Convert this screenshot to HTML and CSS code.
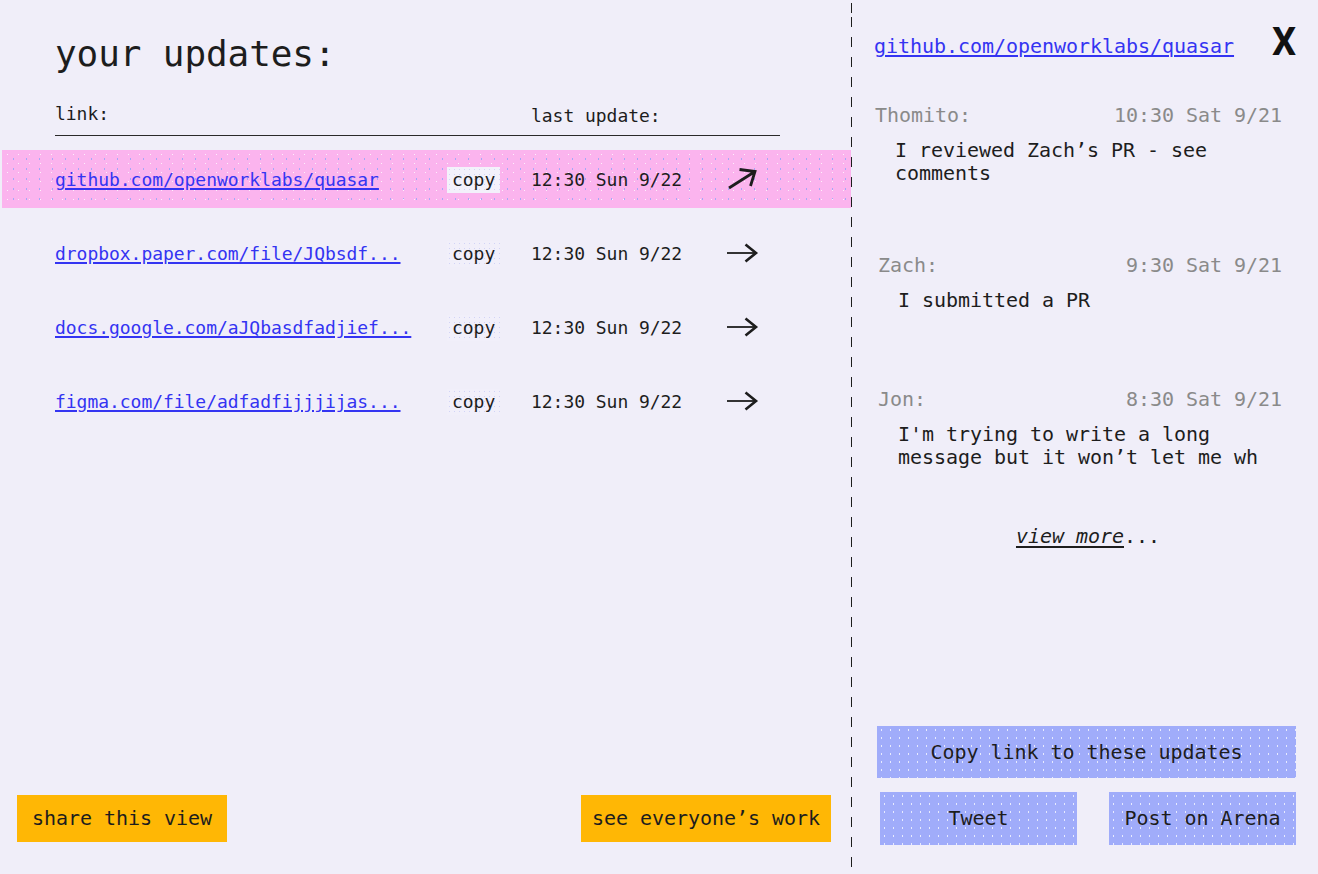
FILE: index.html
```html
<!DOCTYPE html>
<html lang="en">
<head>
<meta charset="utf-8">
<title>your updates</title>
<link rel="stylesheet" href="styles.css">
</head>
<body>
<div class="app">
  <main class="updates">
    <h1 class="title">your updates:</h1>
    <div class="table-head">
      <span class="head-link">link:</span>
      <span class="head-time">last update:</span>
    </div>
    <ul class="rows">
      <li class="row row--active">
        <a class="row-link" href="#">github.com/openworklabs/quasar</a>
        <span class="row-copy"><span class="copy">copy</span></span>
        <span class="row-time">12:30 Sun 9/22</span>
        <svg class="arrow" width="32" height="24" viewBox="0 0 32 24"><path d="M3 20 L29 3.5 M13.5 1.5 L29 3.5 L24.5 18" fill="none" stroke="#1d1d1d" stroke-width="2.8" stroke-linejoin="miter"/></svg>
      </li>
      <li class="row">
        <a class="row-link" href="#">dropbox.paper.com/file/JQbsdf...</a>
        <span class="row-copy"><span class="copy">copy</span></span>
        <span class="row-time">12:30 Sun 9/22</span>
        <svg class="arrow" width="32" height="24" viewBox="0 0 32 24"><path d="M1 11 H30" fill="none" stroke="#1d1d1d" stroke-width="1.8"/><path d="M19.5 2.5 L30 11 L19.5 19.5" fill="none" stroke="#1d1d1d" stroke-width="2.6"/></svg>
      </li>
      <li class="row">
        <a class="row-link" href="#">docs.google.com/aJQbasdfadjief...</a>
        <span class="row-copy"><span class="copy">copy</span></span>
        <span class="row-time">12:30 Sun 9/22</span>
        <svg class="arrow" width="32" height="24" viewBox="0 0 32 24"><path d="M1 11 H30" fill="none" stroke="#1d1d1d" stroke-width="1.8"/><path d="M19.5 2.5 L30 11 L19.5 19.5" fill="none" stroke="#1d1d1d" stroke-width="2.6"/></svg>
      </li>
      <li class="row">
        <a class="row-link" href="#">figma.com/file/adfadfijjjijas...</a>
        <span class="row-copy"><span class="copy">copy</span></span>
        <span class="row-time">12:30 Sun 9/22</span>
        <svg class="arrow" width="32" height="24" viewBox="0 0 32 24"><path d="M1 11 H30" fill="none" stroke="#1d1d1d" stroke-width="1.8"/><path d="M19.5 2.5 L30 11 L19.5 19.5" fill="none" stroke="#1d1d1d" stroke-width="2.6"/></svg>
      </li>
    </ul>
    <footer class="actions">
      <button class="btn btn--orange btn--share">share this view</button>
      <button class="btn btn--orange btn--everyone">see everyone’s work</button>
    </footer>
  </main>

  <div class="divider"></div>

  <aside class="feed">
    <header class="feed-head">
      <a class="feed-link" href="#">github.com/openworklabs/quasar</a>
      <span class="close">X</span>
    </header>
    <ul class="messages">
      <li class="message">
        <div class="msg-meta"><span class="msg-name">Thomito:</span><span class="msg-time">10:30 Sat 9/21</span></div>
        <p class="msg-text">I reviewed Zach’s PR - see comments</p>
      </li>
      <li class="message">
        <div class="msg-meta"><span class="msg-name msg-name--in">Zach:</span><span class="msg-time">9:30 Sat 9/21</span></div>
        <p class="msg-text msg-text--in">I submitted a PR</p>
      </li>
      <li class="message">
        <div class="msg-meta"><span class="msg-name msg-name--in">Jon:</span><span class="msg-time">8:30 Sat 9/21</span></div>
        <p class="msg-text msg-text--in">I'm trying to write a long message but it won’t let me wh</p>
      </li>
    </ul>
    <p class="view-more"><a href="#">view more</a>...</p>
    <div class="share">
      <button class="btn btn--blue btn--copylink">Copy link to these updates</button>
      <div class="share-row">
        <button class="btn btn--blue btn--tweet">Tweet</button>
        <button class="btn btn--blue btn--arena">Post on Arena</button>
      </div>
    </div>
  </aside>
</div>
</body>
</html>
```

FILE: styles.css
```css
* { box-sizing: border-box; }

html, body {
  margin: 0;
  padding: 0;
  background: #f0eef9;
}

body {
  font-family: "DejaVu Sans Mono", "Liberation Mono", monospace;
  color: #1d1d1d;
}

.app {
  display: flex;
  width: 1318px;
  height: 874px;
}

/* ---------- left panel ---------- */
.updates {
  width: 851px;
  display: flex;
  flex-direction: column;
}

.title {
  margin: 33px 0 0 55px;
  font-size: 36px;
  line-height: 42px;
  font-weight: normal;
  letter-spacing: -0.1px;
}

.table-head {
  margin: 28px 0 0 55px;
  width: 725px;
  display: flex;
  align-items: flex-start;
  font-size: 18px;
  line-height: 22px;
  padding-bottom: 8px;
  border-bottom: 1px solid #2a2a2a;
  letter-spacing: -0.04px;
}

.head-link { width: 476px; }
.head-time { padding-top: 2px; }

.rows {
  list-style: none;
  margin: 14px 0 0 0;
  padding: 0;
  display: flex;
  flex-direction: column;
  gap: 16px;
}

.row {
  height: 58px;
  margin-left: 2px;
  padding: 2px 0 0 53px;
  display: flex;
  align-items: center;
  font-size: 18px;
  line-height: 22px;
  letter-spacing: -0.04px;
  white-space: nowrap;
}

.row--active {
  background-color: #fbb4ee;
  background-image:
    radial-gradient(circle, rgba(255,255,255,0.8) 0.7px, transparent 1px),
    radial-gradient(circle, rgba(110,160,255,0.6) 0.7px, transparent 1px);
  background-size: 11px 9px, 13px 10px;
  background-position: 0 0, 5px 4px;
}

.row-link {
  width: 392px;
  color: #3434f2;
  text-decoration: underline;
  text-decoration-thickness: 1.5px;
  text-underline-offset: 2px;
}

.row-copy { width: 84px; }

.copy {
  display: inline-block;
  padding: 2px 5px;
  background-color: #f1effa;
  background-image: radial-gradient(circle, rgba(150,160,240,0.35) 0.6px, transparent 0.9px);
  background-size: 5px 5px;
}

.row--active .copy { background-color: #f3f1fb; }

.row-time { width: 195px; }

.arrow {
  display: block;
  overflow: visible;
}

.actions {
  margin-top: auto;
  padding: 0 20px 32px 17px;
  display: flex;
  justify-content: space-between;
}

.btn {
  font-family: "DejaVu Sans Mono", "Liberation Mono", monospace;
  font-size: 20px;
  letter-spacing: -0.04px;
  color: #1d1d1d;
  border: none;
  margin: 0;
  padding: 0;
  cursor: pointer;
  text-align: center;
  white-space: nowrap;
}

.btn--orange {
  height: 47px;
  line-height: 47px;
  background: #ffb705;
}

.btn--share { width: 210px; }
.btn--everyone { width: 250px; }

/* ---------- divider ---------- */
.divider {
  width: 1px;
  background-image: repeating-linear-gradient(to bottom, #1d1d1d 0 10px, transparent 10px 20px);
  background-position: 0 17px;
}

/* ---------- right panel ---------- */
.feed {
  flex: 1;
  display: flex;
  flex-direction: column;
  padding: 22px 22px 29px 22px;
}

.feed-head {
  display: flex;
  justify-content: space-between;
  align-items: flex-start;
}

.feed-link {
  margin-top: 12px;
  font-size: 20px;
  line-height: 24px;
  letter-spacing: -0.04px;
  color: #3434f2;
  text-decoration: underline;
  text-decoration-thickness: 1.5px;
  text-underline-offset: 2px;
}

.close {
  font-family: "Roboto", "Liberation Sans", sans-serif;
  font-weight: 700;
  font-size: 38px;
  line-height: 40px;
  color: #111;
  margin-top: 0;
  margin-right: 0;
}

.messages {
  list-style: none;
  margin: 41px 0 0 0;
  padding: 0 14px 0 0;
  display: flex;
  flex-direction: column;
  gap: 68px;
}

.msg-meta {
  display: flex;
  justify-content: space-between;
  font-size: 20px;
  line-height: 24px;
  letter-spacing: -0.04px;
  color: #8a8a8a;
  padding-left: 1px;
}

.msg-name--in { padding-left: 3px; }

.msg-text {
  margin: 12px 0 0 21px;
  width: 380px;
  min-height: 30px;
  font-size: 20px;
  line-height: 23px;
  letter-spacing: -0.04px;
}

.msg-text--in { margin-left: 24px; }

.view-more {
  margin: 55px 0 0 0;
  text-align: center;
  font-size: 20px;
  line-height: 24px;
  letter-spacing: -0.04px;
  padding-left: 6px;
}

.view-more a {
  color: #1d1d1d;
  font-style: italic;
  text-decoration: underline;
  text-underline-offset: 3px;
}

.share {
  margin-top: auto;
  display: flex;
  flex-direction: column;
  gap: 14px;
}

.btn--blue {
  background-color: #a0acfa;
  background-image: radial-gradient(circle, rgba(255,255,255,0.75) 0.6px, transparent 0.9px);
  background-size: 9px 8px;
}

.btn--copylink {
  margin-left: 3px;
  height: 52px;
  line-height: 52px;
}

.share-row {
  display: flex;
  justify-content: space-between;
  padding-left: 6px;
}

.btn--tweet { width: 197px; height: 53px; line-height: 53px; }
.btn--arena { width: 187px; height: 53px; line-height: 53px; }
```
